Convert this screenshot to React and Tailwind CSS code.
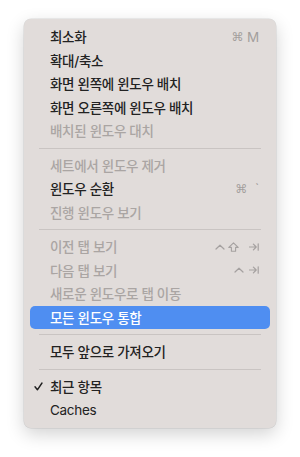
const items = [
  { label: '최소화', shortcut: 'cmdM' },
  { label: '확대/축소' },
  { label: '화면 왼쪽에 윈도우 배치' },
  { label: '화면 오른쪽에 윈도우 배치' },
  { label: '배치된 윈도우 대치', disabled: true },
  { sep: true },
  { label: '세트에서 윈도우 제거', disabled: true },
  { label: '윈도우 순환', shortcut: 'cmdTick' },
  { label: '진행 윈도우 보기', disabled: true },
  { sep: true },
  { label: '이전 탭 보기', disabled: true, shortcut: 'ctrlShiftTab' },
  { label: '다음 탭 보기', disabled: true, shortcut: 'ctrlTab' },
  { label: '새로운 윈도우로 탭 이동', disabled: true },
  { label: '모든 윈도우 통합', active: true },
  { sep: true },
  { label: '모두 앞으로 가져오기' },
  { sep: true },
  { label: '최근 항목', checked: true },
  { label: 'Caches', latin: true },
];

const gray = '#a5a1a0';

const Caret = () => (
  <svg width="10" height="6" viewBox="0 0 10 6">
    <path d="M1 5 L5 1.2 L9 5" fill="none" stroke={gray} strokeWidth="1.2" strokeLinecap="round" strokeLinejoin="round" />
  </svg>
);

const Shift = () => (
  <svg width="11" height="10" viewBox="0 0 11 10">
    <path d="M5.5 0.8 L10.2 5.4 L7.6 5.4 L7.6 9.2 L3.4 9.2 L3.4 5.4 L0.8 5.4 Z" fill="none" stroke={gray} strokeWidth="1.1" strokeLinejoin="round" />
  </svg>
);

const TabKey = () => (
  <svg width="10" height="8" viewBox="0 0 10 8">
    <path d="M0.5 4 H7.2 M4.4 1.2 L7.2 4 L4.4 6.8 M9.2 0.8 V7.2" fill="none" stroke={gray} strokeWidth="1.2" strokeLinecap="round" strokeLinejoin="round" />
  </svg>
);

const Shortcut = ({ kind }) => {
  if (kind === 'cmdM')
    return (
      <span className="flex items-center gap-[4px] text-[13.5px] font-normal text-[#a39f9d]">
        <span style={{ fontFamily: '"DejaVu Sans", sans-serif' }} className="text-[12px]">⌘</span>
        <span>M</span>
      </span>
    );
  if (kind === 'cmdTick')
    return (
      <span className="flex items-center gap-[8px] text-[13px] font-normal text-[#a39f9d]">
        <span style={{ fontFamily: '"DejaVu Sans", sans-serif' }} className="text-[12px]">⌘</span>
        <span className="w-[4px]">`</span>
      </span>
    );
  if (kind === 'ctrlShiftTab')
    return (
      <span className="flex items-center gap-[3px]">
        <Caret />
        <Shift />
        <span className="w-[4px]" />
        <TabKey />
      </span>
    );
  return (
    <span className="flex items-center gap-[5px]">
      <Caret />
      <TabKey />
    </span>
  );
};

const Check = () => (
  <svg width="9" height="9" viewBox="0 0 9 9" className="absolute left-[4px] top-[7px]">
    <path d="M1 4.8 L3.4 7.8 L8 1" fill="none" stroke="#1f1f1f" strokeWidth="1.4" strokeLinecap="round" strokeLinejoin="round" />
  </svg>
);

export default function App() {
  return (
    <div className="w-[300px] h-[457px] bg-white pt-[19px] pl-[24px]" style={{ fontFamily: '"Inter", "Noto Sans CJK KR", "DejaVu Sans", sans-serif' }}>
      <div className="w-[252px] rounded-[7px] bg-[#e1dcda] p-[6px] shadow-[0_6px_18px_rgba(0,0,0,0.18),0_0_0_0.5px_rgba(0,0,0,0.12)]">
        {items.map((it, i) =>
          it.sep ? (
            <div key={i} className="h-[11px] flex items-center px-[9px]">
              <div className="h-px w-full bg-[#c9c4c2]" />
            </div>
          ) : (
            <div
              key={i}
              className={`relative h-[23.5px] flex items-center justify-between pl-[20px] pr-[11px] rounded-[5px] text-[13.5px] tracking-[-0.3px] ${
                it.latin ? 'font-normal' : 'font-medium'
              } ${it.active ? 'bg-[#4f8ef1] text-white' : it.disabled ? 'text-[#aaa5a3]' : 'text-[#222]'}`}
            >
              {it.checked && <Check />}
              <span className="pt-[1px]">{it.label}</span>
              {it.shortcut && <Shortcut kind={it.shortcut} />}
            </div>
          )
        )}
      </div>
    </div>
  );
}
